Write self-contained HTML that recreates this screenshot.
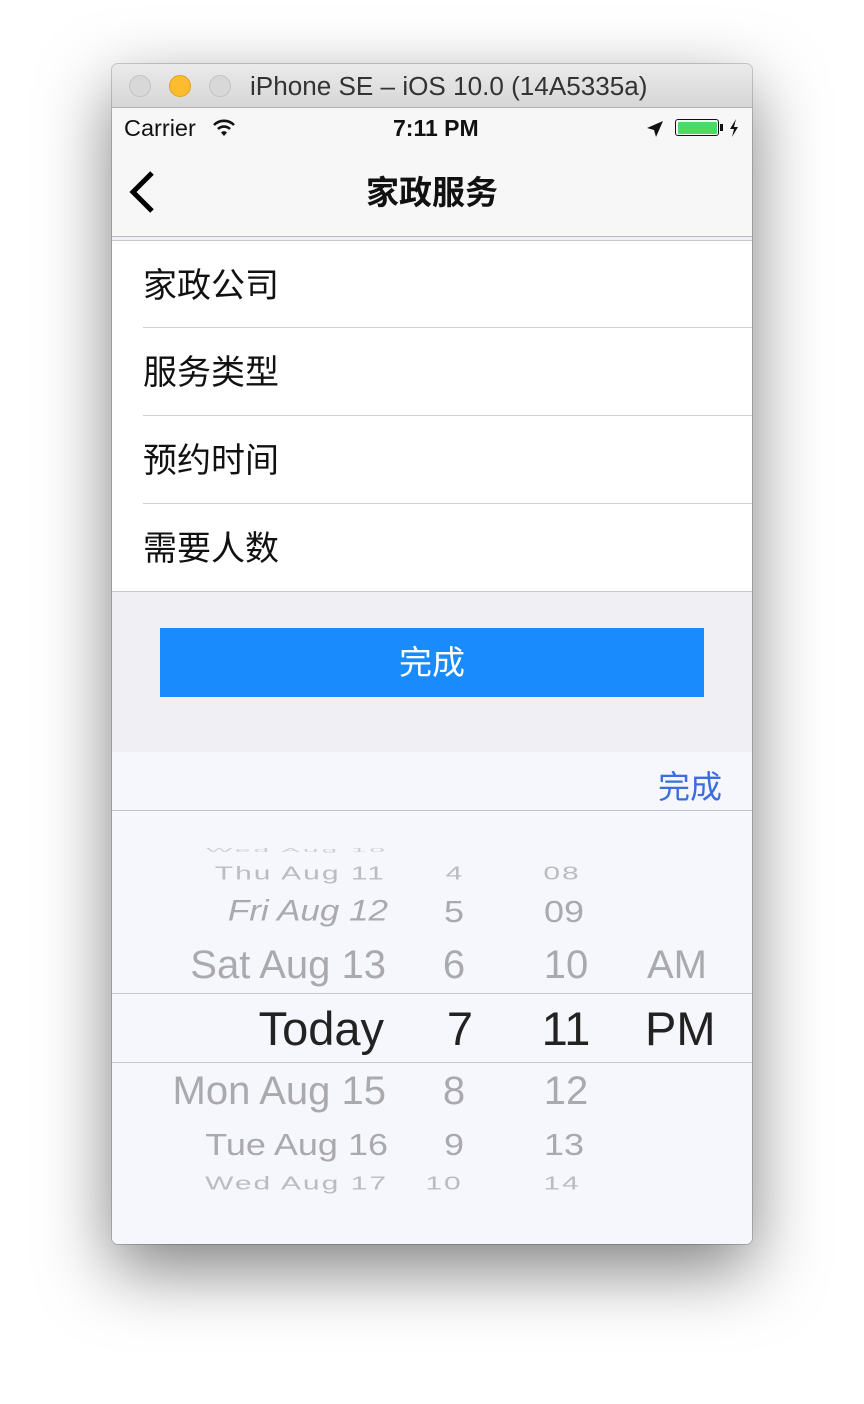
<!DOCTYPE html>
<html><head><meta charset="utf-8"><style>
body{margin:0;width:864px;height:1404px;background:#fff;position:relative;overflow:hidden;font-family:"Liberation Sans","Noto Sans CJK SC",sans-serif}
.win{position:absolute;left:112px;top:64px;width:640px;height:1180px;border-radius:6px;overflow:hidden;box-shadow:0 25px 70px rgba(0,0,0,.5),0 0 0 1px rgba(0,0,0,.18);background:#f7f7f8}
.tb{position:absolute;left:0;top:0;width:640px;height:43px;background:linear-gradient(#ebebeb,#d6d6d6);border-bottom:1px solid #b4b4b4}
.dot{position:absolute;top:11px;width:22px;height:22px;border-radius:50%;background:#d8d8d8;border:1px solid #c2c2c2;box-sizing:border-box}
.tt{position:absolute;left:138px;top:7px;font-size:26.1px;color:#333}
.abs{position:absolute}
.row{position:absolute;left:0;width:640px;height:88px;background:#fff}
.row span{position:absolute;left:31px;top:17px;font-size:34px;color:#111}
.row i{position:absolute;left:31px;right:0;bottom:0;height:1px;background:#d0d0d4}
.pk{position:absolute;font-size:40px;color:#aaaaae;white-space:nowrap}
.r{text-align:right}.c{text-align:center}
</style></head><body>
<div class="win">
 <div class="tb">
  <div class="dot" style="left:17px"></div>
  <div class="dot" style="left:57px;background:#fdbb30;border-color:#e0a020"></div>
  <div class="dot" style="left:97px"></div>
  <div class="tt">iPhone SE – iOS 10.0 (14A5335a)</div>
 </div>
 <div class="abs" style="left:12px;top:51px;font-size:23.5px;color:#111">Carrier</div>
 <svg class="abs" style="left:100px;top:54px" width="24" height="20" viewBox="0 0 24 20"><path d="M2 7a14 14 0 0 1 20 0" stroke="#111" stroke-width="2.6" fill="none"/><path d="M6 11a8.5 8.5 0 0 1 12 0" stroke="#111" stroke-width="2.6" fill="none"/><path d="M9 14.5l3 3.5 3-3.5a4 4 0 0 0-6 0z" fill="#111"/></svg>
 <div class="abs" style="left:281px;top:51px;font-size:23px;font-weight:bold;color:#111">7:11 PM</div>
 <svg class="abs" style="left:534px;top:56px" width="18" height="18" viewBox="0 0 18 18"><path d="M17 1L1 8l7 2 2 7z" fill="#111"/></svg>
 <div class="abs" style="left:563px;top:55px;width:44px;height:17px;border:1.5px solid #111;border-radius:3px;box-sizing:border-box;padding:1.5px"><div style="background:#4cd964;width:100%;height:100%;border-radius:1px"></div></div>
 <div class="abs" style="left:608px;top:60px;width:3px;height:7px;background:#111"></div>
 <svg class="abs" style="left:616px;top:54px" width="12" height="20" viewBox="0 0 12 20"><path d="M8 1L2 11h4l-2 8 6-10H6z" fill="#111"/></svg>
 <svg class="abs" style="left:14px;top:105px" width="32" height="46" viewBox="0 0 32 46"><path d="M26 4L7 23l19 19" stroke="#000" stroke-width="5" fill="none"/></svg>
 <div class="abs" style="left:0;width:640px;top:102px;text-align:center;font-size:33px;font-weight:bold;color:#111">家政服务</div>
 <div class="abs" style="left:0;top:172px;width:640px;height:1px;background:#b8b8bc"></div>
 <div class="abs" style="left:0;top:173px;width:640px;height:4px;background:#efeff4"></div>
 <div class="abs" style="left:0;top:176px;width:640px;height:1px;background:#c8c8cc"></div>
 <div class="row" style="top:177px;height:87px"><span>家政公司</span><i></i></div>
 <div class="row" style="top:264px"><span>服务类型</span><i></i></div>
 <div class="row" style="top:352px"><span>预约时间</span><i></i></div>
 <div class="row" style="top:440px"><span>需要人数</span><i style="left:0;background:#c8c8cc"></i></div>
 <div class="abs" style="left:0;top:528px;width:640px;height:160px;background:#efeff4"></div>
 <div class="abs" style="left:48px;top:564px;width:544px;height:69px;background:#1a8bfc;color:#fff;font-size:33px;text-align:center;line-height:69px">完成</div>
 <div class="abs" style="left:0;top:688px;width:640px;height:492px;background:#f6f6fd"></div>
 <div class="abs" style="left:546px;top:698px;font-size:32px;color:#3b6de0">完成</div>
 <div class="abs" style="left:0;top:746px;width:640px;height:1px;background:#c4c4c8"></div>
 <div class="abs" style="left:0;top:929px;width:640px;height:1px;background:#c8c8cc"></div>
 <div class="abs" style="left:0;top:998px;width:640px;height:1px;background:#c8c8cc"></div>
 <!-- date col -->
 <div class="pk r" style="left:0;width:276px;top:770px;transform:scaleY(.2);color:#d0d0d4;font-size:28px;letter-spacing:3px">Wed Aug 10</div>
 <div class="pk r" style="left:0;width:274px;top:793px;transform:scaleY(.6);color:#bcbcc0;font-size:30px;letter-spacing:2px">Thu Aug 11</div>
 <div class="pk r" style="left:0;width:276px;top:827px;transform:scaleY(.85);font-size:35px;font-style:italic">Fri Aug 12</div>
 <div class="pk r" style="left:0;width:274px;top:879px;font-size:40px">Sat Aug 13</div>
 <div class="pk r" style="left:0;width:272px;top:937px;font-size:47px;color:#222">Today</div>
 <div class="pk r" style="left:0;width:274px;top:1005px;font-size:40px">Mon Aug 15</div>
 <div class="pk r" style="left:0;width:276px;top:1060px;transform:scaleY(.85);font-size:36px">Tue Aug 16</div>
 <div class="pk r" style="left:0;width:276px;top:1103px;transform:scaleY(.6);color:#bcbcc0;font-size:30px;letter-spacing:2px">Wed Aug 17</div>
 <!-- hour -->
 <div class="pk c" style="left:312px;width:60px;top:793px;transform:scaleY(.6);font-size:30px;color:#bcbcc0">4</div>
 <div class="pk c" style="left:312px;width:60px;top:827px;transform:scaleY(.85);font-size:36px">5</div>
 <div class="pk c" style="left:312px;width:60px;top:879px;font-size:40px">6</div>
 <div class="pk c" style="left:318px;width:60px;top:937px;font-size:47px;color:#222">7</div>
 <div class="pk c" style="left:312px;width:60px;top:1005px;font-size:40px">8</div>
 <div class="pk c" style="left:312px;width:60px;top:1060px;transform:scaleY(.85);font-size:36px">9</div>
 <div class="pk c" style="left:302px;width:60px;top:1103px;transform:scaleY(.6);font-size:30px;color:#bcbcc0;letter-spacing:2px">10</div>
 <!-- minute -->
 <div class="pk c" style="left:420px;width:60px;top:793px;transform:scaleY(.6);font-size:30px;color:#bcbcc0;letter-spacing:2px">08</div>
 <div class="pk c" style="left:422px;width:60px;top:827px;transform:scaleY(.85);font-size:36px">09</div>
 <div class="pk c" style="left:424px;width:60px;top:879px;font-size:40px">10</div>
 <div class="pk c" style="left:424px;width:60px;top:937px;font-size:47px;color:#222">11</div>
 <div class="pk c" style="left:424px;width:60px;top:1005px;font-size:40px">12</div>
 <div class="pk c" style="left:422px;width:60px;top:1060px;transform:scaleY(.85);font-size:36px">13</div>
 <div class="pk c" style="left:420px;width:60px;top:1103px;transform:scaleY(.6);font-size:30px;color:#bcbcc0;letter-spacing:2px">14</div>
 <div class="pk" style="left:535px;top:879px;font-size:40px">AM</div>
 <div class="pk" style="left:533px;top:937px;font-size:47px;color:#222">PM</div>
</div>
</body></html>
